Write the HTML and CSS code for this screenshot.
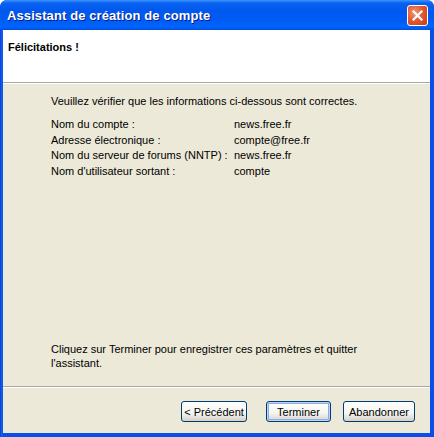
FILE: index.html
```html
<!DOCTYPE html>
<html lang="fr">
<head>
  <meta charset="UTF-8">
  <title>Assistant de création de compte</title>
  <link rel="stylesheet" href="styles.css">
</head>
<body>
  <div class="window">
    <div class="titlebar">
      <span class="title">Assistant de création de compte</span>
      <button class="close-btn" aria-label="Fermer">
        <svg width="11" height="11" viewBox="0 0 11 11">
          <path d="M1.5 1.5 L9.5 9.5 M9.5 1.5 L1.5 9.5" stroke="#fff" stroke-width="2.2" stroke-linecap="square"/>
        </svg>
      </button>
    </div>
    <div class="frame">
      <div class="header">
        <h2>Félicitations !</h2>
      </div>
      <div class="content">
        <p class="intro">Veuillez vérifier que les informations ci-dessous sont correctes.</p>
        <table class="summary">
          <tr><td>Nom du compte :</td><td>news.free.fr</td></tr>
          <tr><td>Adresse électronique :</td><td>compte@free.fr</td></tr>
          <tr><td>Nom du serveur de forums (NNTP) :</td><td>news.free.fr</td></tr>
          <tr><td>Nom d'utilisateur sortant :</td><td>compte</td></tr>
        </table>
        <p class="outro">Cliquez sur Terminer pour enregistrer ces paramètres et quitter l'assistant.</p>
      </div>
      <div class="footer">
        <button class="btn back">&lt; Précédent</button>
        <button class="btn default">Terminer</button>
        <button class="btn cancel">Abandonner</button>
      </div>
    </div>
  </div>
</body>
</html>
```

FILE: styles.css
```css
body {
  margin: 0;
  background: #fff;
  font-family: "Liberation Sans", Arial, sans-serif;
  font-size: 11px;
  color: #000;
}
.window {
  width: 434px;
  height: 437px;
  display: flex;
  flex-direction: column;
  box-sizing: border-box;
  background: linear-gradient(90deg, #0a3fd6 0, #1663f0 2px, #0a4ee6 3px, #0a4ee6 100%);
  border-radius: 7px 7px 0 0;
  overflow: hidden;
}
.titlebar {
  height: 30px;
  flex: none;
  display: flex;
  align-items: center;
  justify-content: space-between;
  padding: 0 6px 0 7px;
  background: linear-gradient(#3d95ff 0%, #0a62f2 10%, #0058ee 35%, #005cf4 70%, #0066ff 88%, #0050e0 100%);
}
.title {
  color: #fff;
  font-weight: bold;
  font-size: 13px;
  text-shadow: 1px 1px #0a1883;
  letter-spacing: 0.1px;
}
.close-btn {
  width: 21px;
  height: 21px;
  padding: 0;
  border: 1px solid #fff;
  border-radius: 3px;
  background: radial-gradient(circle at 35% 35%, #f29a7c 0%, #e25b34 45%, #c73a12 100%);
  display: flex;
  align-items: center;
  justify-content: center;
  margin-top: 1px;
}
.frame {
  flex: 1;
  display: flex;
  flex-direction: column;
  margin: 0 4px 4px 3px;
  background: #ece9d8;
}
.header {
  height: 53px;
  flex: none;
  background: #fff;
  border-bottom: 1px solid #aca899;
  box-shadow: 0 1px 0 #fff;
  box-sizing: border-box;
  padding: 11px 5px;
}
.header h2 {
  margin: 0;
  font-size: 11px;
  font-weight: bold;
}
.content {
  flex: 1;
  display: flex;
  flex-direction: column;
  padding: 12px 20px 0 48px;
}
.intro {
  margin: 0 0 10px;
  line-height: 13px;
}
.summary {
  border-collapse: collapse;
}
.summary td {
  padding: 0;
  height: 15.7px;
  vertical-align: top;
  line-height: 13px;
}
.summary td:first-child {
  width: 183px;
}
.outro {
  margin: auto 0 16px;
  line-height: 14px;
}
.footer {
  flex: none;
  height: 47px;
  border-top: 1px solid #aca899;
  box-shadow: inset 0 1px 0 #fff;
  display: flex;
  justify-content: flex-end;
  align-items: flex-start;
  padding: 14px 15px 0 0;
  box-sizing: border-box;
}
.btn {
  height: 21px;
  padding: 0;
  font-family: "Liberation Sans", Arial, sans-serif;
  font-size: 11px;
  color: #000;
  border: 1px solid #003c74;
  border-radius: 3px;
  background: linear-gradient(#fff 0%, #f4f4f0 60%, #d6d0c5 100%);
}
.btn.back {
  width: 66px;
}
.btn.default {
  width: 65px;
  margin-left: 19px;
  box-shadow: inset 0 0 0 1px #bcd4f6, inset 0 0 0 2px #89ade4;
}
.btn.cancel {
  width: 72px;
  margin-left: 12px;
}
```
